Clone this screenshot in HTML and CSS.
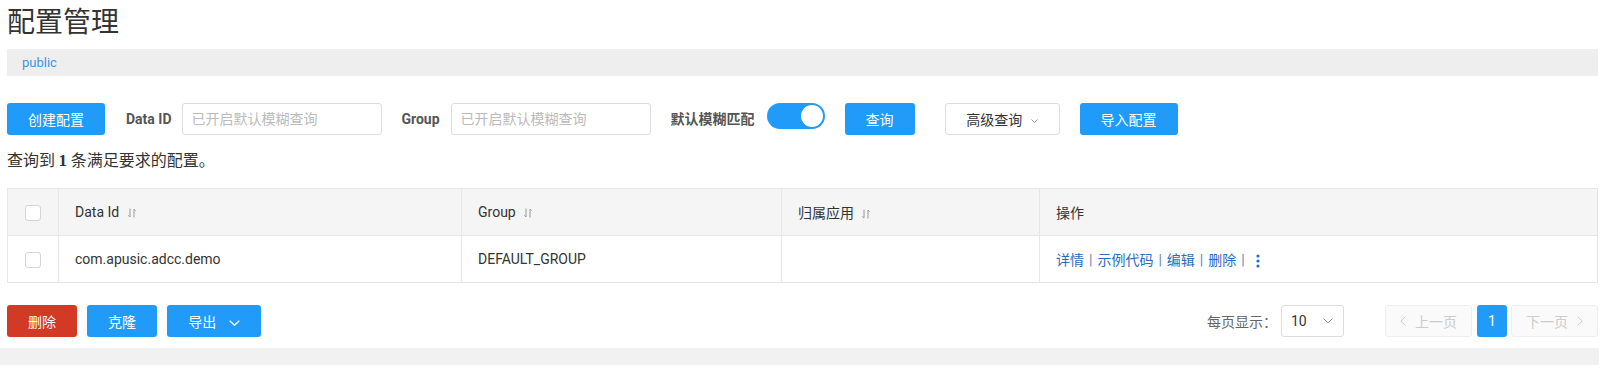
FILE: index.html
```html
<!DOCTYPE html>
<html lang="zh-CN">
<head>
  <meta charset="UTF-8">
  <meta name="viewport" content="width=device-width, initial-scale=1.0">
  <title>配置管理</title>
  <link rel="stylesheet" href="styles.css">
</head>
<body>
  <div class="page">
    <h1 class="page-title">配置管理</h1>

    <!-- namespace -->
    <div class="namespace-bar">
      <a class="namespace">public</a>
    </div>

    <!-- search toolbar -->
    <div class="toolbar">
      <button class="btn btn-primary btn-create">创建配置</button>
      <label class="field-label label-dataid">Data ID</label>
      <input class="search-input" placeholder="已开启默认模糊查询">
      <label class="field-label label-group">Group</label>
      <input class="search-input" placeholder="已开启默认模糊查询">
      <label class="field-label label-fuzzy">默认模糊匹配</label>
      <div class="switch"><span class="knob"></span></div>
      <button class="btn btn-primary btn-query">查询</button>
      <button class="btn btn-normal btn-advanced">高级查询
        <svg class="caret-small" width="7" height="4" viewBox="0 0 7 4"><polyline points="0.5,0.5 3.5,3.5 6.5,0.5" fill="none" stroke="#999" stroke-width="1"/></svg>
      </button>
      <button class="btn btn-primary btn-import">导入配置</button>
    </div>

    <div class="result-count">查询到 <strong>1</strong> 条满足要求的配置。</div>

    <!-- config table -->
    <table class="config-table">
      <colgroup>
        <col style="width: 51px">
        <col style="width: 403px">
        <col style="width: 320px">
        <col style="width: 258px">
        <col>
      </colgroup>
      <thead>
        <tr>
          <th class="cell-check"><span class="checkbox"></span></th>
          <th>Data Id <svg class="sort-icon" width="8" height="10" viewBox="0 0 8 10"><path d="M2 0.5V9M0.3 7.3L2 9M6 9.5V1M7.7 2.7L6 1" fill="none" stroke="#999" stroke-width="1"/></svg></th>
          <th>Group <svg class="sort-icon" width="8" height="10" viewBox="0 0 8 10"><path d="M2 0.5V9M0.3 7.3L2 9M6 9.5V1M7.7 2.7L6 1" fill="none" stroke="#999" stroke-width="1"/></svg></th>
          <th>归属应用 <svg class="sort-icon" width="8" height="10" viewBox="0 0 8 10"><path d="M2 0.5V9M0.3 7.3L2 9M6 9.5V1M7.7 2.7L6 1" fill="none" stroke="#999" stroke-width="1"/></svg></th>
          <th>操作</th>
        </tr>
      </thead>
      <tbody>
        <tr>
          <td class="cell-check"><span class="checkbox"></span></td>
          <td>com.apusic.adcc.demo</td>
          <td>DEFAULT_GROUP</td>
          <td></td>
          <td class="actions">
            <a>详情</a><span class="sep">|</span><a>示例代码</a><span class="sep">|</span><a>编辑</a><span class="sep">|</span><a>删除</a><span class="sep">|</span><svg class="more-icon" width="4" height="14" viewBox="0 0 4 14"><circle cx="2" cy="2" r="1.6"/><circle cx="2" cy="7" r="1.6"/><circle cx="2" cy="12" r="1.6"/></svg>
          </td>
        </tr>
      </tbody>
    </table>

    <!-- batch actions + pagination -->
    <div class="footer">
      <div class="batch">
        <button class="btn btn-danger btn-batch">删除</button>
        <button class="btn btn-primary btn-batch">克隆</button>
        <button class="btn btn-primary btn-export">导出
          <svg class="caret" width="11" height="6" viewBox="0 0 11 6"><polyline points="0.7,0.7 5.5,5.3 10.3,0.7" fill="none" stroke="#fff" stroke-width="1.3"/></svg>
        </button>
      </div>
      <div class="pagination">
        <span class="page-size-label">每页显示：</span>
        <div class="page-size">
          <span>10</span>
          <svg width="10" height="6" viewBox="0 0 10 6"><polyline points="0.5,0.5 5,5 9.5,0.5" fill="none" stroke="#999" stroke-width="1"/></svg>
        </div>
        <button class="page-btn page-prev" disabled>
          <svg width="6" height="10" viewBox="0 0 6 10"><polyline points="5.5,0.5 0.8,5 5.5,9.5" fill="none" stroke="#ccc" stroke-width="1"/></svg>
          上一页
        </button>
        <button class="page-num current">1</button>
        <button class="page-btn page-next" disabled>
          下一页
          <svg width="6" height="10" viewBox="0 0 6 10"><polyline points="0.5,0.5 5.2,5 0.5,9.5" fill="none" stroke="#ccc" stroke-width="1"/></svg>
        </button>
      </div>
    </div>
  </div>
  <div class="scroll-track"></div>
</body>
</html>
```

FILE: styles.css
```css
html, body {
  margin: 0;
  padding: 0;
  overflow: hidden;
}
body {
  font-family: Roboto, "Noto Sans CJK SC", sans-serif;
  font-size: 14px;
  color: #333;
  background: #fff;
}
.page {
  padding: 6px 11px 0 7px;
}

.page-title {
  margin: 0 0 15px;
  font-family: "Noto Sans CJK SC", sans-serif;
  font-size: 28px;
  line-height: 28px;
  font-weight: 400;
  color: #333;
}

.namespace-bar {
  height: 27px;
  line-height: 27px;
  padding-left: 15px;
  background: #eee;
}
.namespace {
  color: #3a96e4;
  font-size: 13px;
  cursor: pointer;
}

/* toolbar */
.toolbar {
  display: flex;
  align-items: flex-start;
  margin-top: 27px;
  height: 32px;
}
.btn {
  height: 32px;
  padding: 0;
  border: 0;
  border-radius: 3px;
  font-family: inherit;
  font-size: 14px;
  cursor: pointer;
}
.btn-primary {
  background: #209bfa;
  color: #fff;
}
.btn-danger {
  background: #d23a26;
  color: #fff;
}
.btn-normal {
  background: #fff;
  color: #333;
  border: 1px solid #ddd;
}
.btn-create { width: 98px; margin-right: 21px; }
.btn-query { width: 70px; margin-right: 30px; }
.btn-advanced { width: 115px; margin-right: 20px; }
.btn-import { width: 98px; }
.caret-small {
  margin-left: 5px;
  vertical-align: middle;
}

.field-label {
  line-height: 32px;
  font-size: 14px;
  font-weight: bold;
  color: #555;
  margin-right: 11px;
}
.label-dataid { margin-right: 10px; }
.label-fuzzy { margin-right: 12px; }

.search-input {
  box-sizing: border-box;
  width: 200px;
  height: 32px;
  margin: 0 20px 0 0;
  padding: 0 9px;
  border: 1px solid #ddd;
  border-radius: 3px;
  font-family: inherit;
  font-size: 14px;
  color: #333;
  outline: none;
}
.search-input::placeholder {
  color: #bbb;
}

.switch {
  position: relative;
  width: 58px;
  height: 26px;
  margin-right: 20px;
  border-radius: 13px;
  background: #209bfa;
}
.switch .knob {
  position: absolute;
  top: 2px;
  right: 2px;
  width: 22px;
  height: 22px;
  border-radius: 50%;
  background: #fff;
}

.result-count {
  margin-top: 14px;
  font-size: 16px;
  line-height: 20px;
  font-family: "Noto Sans CJK SC", sans-serif;
}
.result-count strong {
  font-family: "Liberation Serif", serif;
  font-size: 17px;
}

/* table */
.config-table {
  width: 100%;
  margin-top: 17px;
  border-collapse: collapse;
  table-layout: fixed;
  border: 1px solid #e6e6e6;
}
.config-table th,
.config-table td {
  height: 46px;
  padding: 0 16px;
  border: 1px solid #e6e6e6;
  text-align: left;
  font-weight: 400;
  font-size: 14px;
  color: #333;
}
.config-table thead th {
  background: #f5f5f5;
}
.config-table .cell-check {
  padding: 0;
  text-align: center;
}
.checkbox {
  display: inline-block;
  box-sizing: border-box;
  width: 16px;
  height: 16px;
  border: 1px solid #d5d5d5;
  border-radius: 3px;
  background: #fff;
  vertical-align: middle;
}
.sort-icon {
  margin-left: 5px;
  vertical-align: middle;
}
.actions a {
  color: #2a6cbf;
  cursor: pointer;
}
.actions .sep {
  margin: 0 5px;
  color: #5b86c0;
}
.more-icon {
  fill: #2a6cbf;
  margin-left: 6px;
  vertical-align: middle;
}

/* footer */
.footer {
  display: flex;
  justify-content: space-between;
  align-items: center;
  margin-top: 22px;
  height: 32px;
}
.batch {
  display: flex;
  gap: 10px;
}
.btn-batch { width: 70px; }
.btn-export { width: 94px; }
.caret {
  margin-left: 9px;
  vertical-align: middle;
}

.pagination {
  display: flex;
  align-items: center;
}
.page-size-label {
  color: #666;
  margin-right: 4px;
}
.page-size {
  box-sizing: border-box;
  display: flex;
  align-items: center;
  justify-content: space-between;
  width: 63px;
  height: 32px;
  margin-right: 41px;
  padding: 0 10px 0 9px;
  border: 1px solid #ddd;
  border-radius: 3px;
  color: #333;
}
.page-btn {
  box-sizing: border-box;
  display: flex;
  align-items: center;
  justify-content: center;
  gap: 9px;
  width: 87px;
  height: 32px;
  padding: 0;
  border: 1px solid #eee;
  border-radius: 3px;
  background: #fafafa;
  color: #ccc;
  font-family: inherit;
  font-size: 14px;
}
.page-num {
  width: 30px;
  height: 32px;
  margin: 0 4px 0 5px;
  padding: 0;
  border: 0;
  border-radius: 3px;
  font-family: inherit;
  font-size: 14px;
}
.page-num.current {
  background: #209bfa;
  color: #fff;
}

.scroll-track {
  width: 1599px;
  height: 17px;
  margin-top: 11px;
  background: #f1f1f1;
}
```
